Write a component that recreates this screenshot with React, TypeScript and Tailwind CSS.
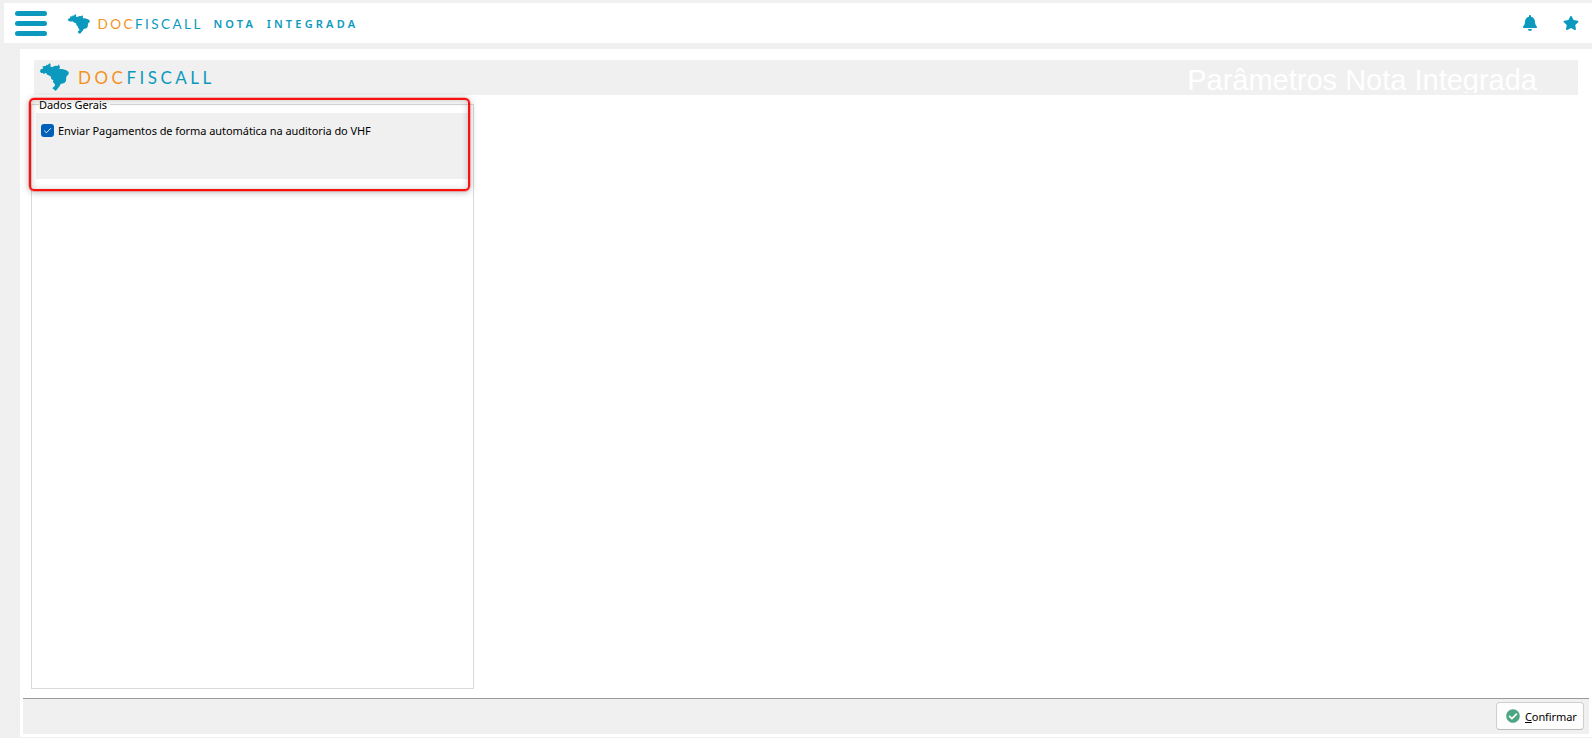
import { FaBell, FaStar, FaCheckCircle } from 'react-icons/fa';

interface LogoProps {
  large?: boolean;
}

function BrazilMap({ className }: { className: string }) {
  return (
    <svg className={className} viewBox="0 0 87 84" fill="currentColor" preserveAspectRatio="none">
      <path d="M8 10 L18 9 L18 5 L23 7 L28 1 L32 3 L31 10 L36 13 L43 9 L48 8 L53 9 L56 4 L60 12 L58 18 L67 18 L79 22 L86 27 L86 33 L79 41 L78 54 L73 60 L62 63 L59 69 L54 76 L47 84 L43 80 L37 76 L45 68 L44 62 L39 58 L40 52 L34 48 L32 40 L22 35 L18 30 L10 33 L9 30 L3 30 L0 25 L2 19 L9 17 Z" />
    </svg>
  );
}

function Logo({ large }: LogoProps) {
  return (
    <div className="flex items-center text-[#0b99be]">
      <BrazilMap className={large ? 'w-[29px] h-7' : 'w-[22px] h-5'} />
      <span
        className={`font-[Lato] leading-none whitespace-nowrap ${
          large ? 'ml-[9px] text-[17px] tracking-[3.5px]' : 'ml-[7.5px] mt-[3px] text-[13.5px] tracking-[2.45px]'
        }`}
      >
        <span className="text-[#f4921f]">DOC</span>FISCALL
      </span>
    </div>
  );
}

function TopBar() {
  return (
    <header className="ml-1 mt-[3px] h-10 bg-white flex items-center text-[#0b99be]">
      <button className="ml-[11px] w-8 flex flex-col gap-[5px]">
        <span className="h-[5px] rounded-full bg-[#0b99be]" />
        <span className="h-[5px] rounded-full bg-[#0b99be]" />
        <span className="h-[5px] rounded-full bg-[#0b99be]" />
      </button>
      <div className="ml-[21px] mt-px">
        <Logo />
      </div>
      <span className="ml-[10.5px] mt-px text-[11px] leading-none font-semibold tracking-[3.2px] [word-spacing:4.5px] whitespace-nowrap">
        NOTA INTEGRADA
      </span>
      <div className="ml-auto mr-[13px] flex items-center gap-[26px]">
        <FaBell className="w-[14px] h-4" />
        <FaStar className="w-4 h-4" />
      </div>
    </header>
  );
}

function GeneralData() {
  return (
    <div className="relative ml-[11px] mt-[9px] w-[443px] h-[585px] border border-[#d9d9d9] text-[11px] text-black">
      <span className="absolute left-[7px] -top-[6px] h-[11px] pr-[3px] leading-[11px] bg-white tracking-[-0.05px]">
        Dados Gerais
      </span>
      <div className="ml-1 mt-2 mr-[3px] h-[66px] bg-[#f0f0f0]">
        <label className="flex items-center pl-[5px] pt-[10px]">
          <span className="w-[13px] h-[13px] rounded-[3px] bg-[#005fb8] flex items-center justify-center">
            <svg className="w-[9px] h-[9px]" viewBox="0 0 9 9" fill="none" stroke="#fff" strokeWidth="0.9">
              <path d="M1.2 4.7 L3.4 6.8 L7.9 2.2" />
            </svg>
          </span>
          <span className="ml-1 mt-px leading-[13px] whitespace-nowrap tracking-[-0.06px]">
            Enviar Pagamentos de forma automática na auditoria do VHF
          </span>
        </label>
      </div>
      {/* Highlight frame over the group box */}
      <div className="absolute -left-[3px] -top-[7px] w-[441px] h-[93px] rounded-[5px] border-2 border-[#fb1010] shadow-[0_0_0_0.5px_rgba(251,24,24,0.5),0_1px_7px_rgba(0,0,0,0.3),inset_0_1px_7px_rgba(0,0,0,0.22)]" />
    </div>
  );
}

export default function App() {
  return (
    <div className="h-[738px] w-[1592px] overflow-hidden bg-[#f0f0f0] flex flex-col font-['Noto_Sans',sans-serif]">
      <TopBar />
      <main className="ml-5 mt-1.5 h-[688px] bg-white flex flex-col">
        <div className="ml-[14px] mr-[14px] mt-[11px] h-[35px] pl-1.5 pr-[41px] bg-[#f0f0f0] flex items-center justify-between">
          <div className="-mt-px">
            <Logo large />
          </div>
          <h1 className="mt-[3px] h-[28px] overflow-hidden font-['Liberation_Sans',sans-serif] text-[29px] leading-[30px] text-white whitespace-nowrap">
            Parâmetros Nota Integrada
          </h1>
        </div>
        <GeneralData />
        <footer className="ml-[3px] mr-[3px] mt-[9px] h-9 border-t border-[#999] bg-[#f0f0f0] flex justify-end pr-[5px] pt-[3px]">
          <button className="w-[88px] h-7 rounded border border-[#cfcfcf] border-b-[#bbb] bg-[#fdfdfd] flex items-center pl-[9px] text-[11px] text-black">
            <FaCheckCircle className="w-[14px] h-[14px] text-[#4ca683]" />
            <span className="ml-[5px] mt-[3px] tracking-[-0.1px]">
              <u>C</u>onfirmar
            </span>
          </button>
        </footer>
      </main>
    </div>
  );
}
